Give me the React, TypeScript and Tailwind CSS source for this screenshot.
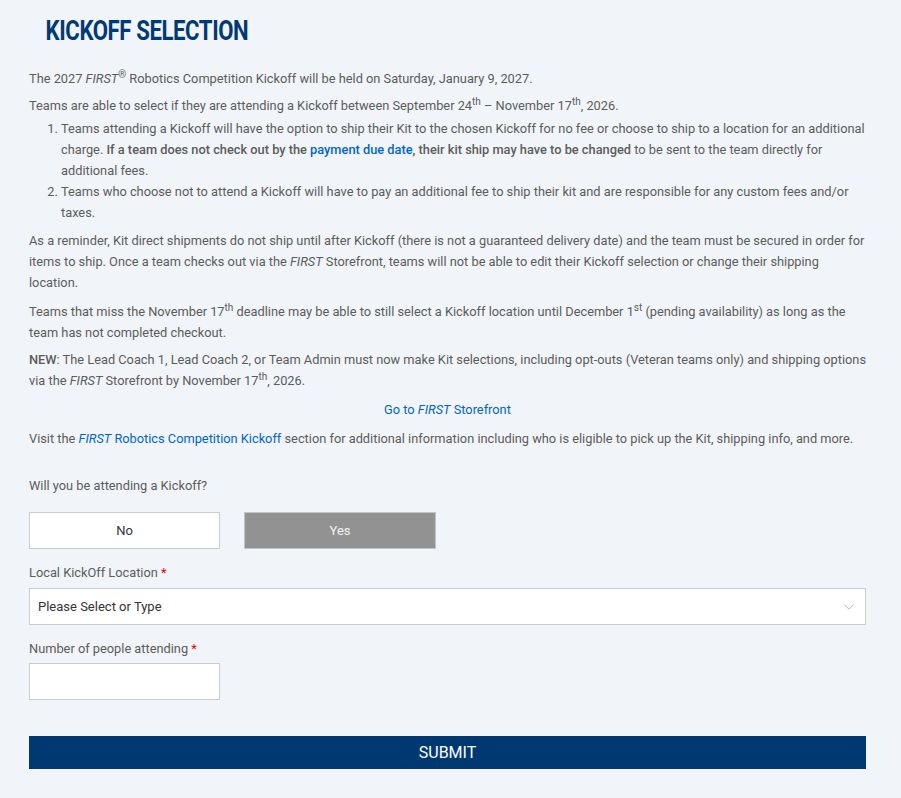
import { ChevronDown } from "lucide-react";

const font = { fontFamily: "Roboto, 'Liberation Sans', sans-serif" };

function Sup({ children }: { children: React.ReactNode }) {
  return <sup className="text-[10px] leading-none">{children}</sup>;
}

function First() {
  return <em>FIRST</em>;
}

export default function App() {
  return (
    <div className="min-h-[798px] bg-[#f1f4f9] text-[#5c5c5c] text-[12.8px] leading-[21px]" style={font}>
      <div className="pl-[29px] pr-[35px] pt-[14px] pb-[28px]">
        <h1 className="pl-[21px] text-[28px] leading-[34px] font-bold text-[#003a74] tracking-[-0.5px] origin-left scale-x-[0.79] whitespace-nowrap">
          KICKOFF SELECTION
        </h1>

        <div className="mt-[20px] -mr-[4px] flex flex-col gap-[6px]">
          <p>
            The 2027 <First /><Sup>®</Sup> Robotics Competition Kickoff will be held on Saturday, January 9, 2027.
          </p>
          <div>
            <p>
              Teams are able to select if they are attending a Kickoff between September 24<Sup>th</Sup> – November 17<Sup>th</Sup>, 2026.
            </p>
            <ol className="list-decimal pl-[32px] mt-[2px]">
              <li>
                Teams attending a Kickoff will have the option to ship their Kit to the chosen Kickoff for no fee or choose to ship to a location for an additional charge.{" "}
                <strong className="font-medium">
                  If a team does not check out by the <a className="text-[#0066cc]">payment due date</a>, their kit ship may have to be changed
                </strong>{" "}
                to be sent to the team directly for additional fees.
              </li>
              <li>
                Teams who choose not to attend a Kickoff will have to pay an additional fee to ship their kit and are responsible for any custom fees and/or taxes.
              </li>
            </ol>
          </div>
          <p className="mt-[1px]">
            As a reminder, Kit direct shipments do not ship until after Kickoff (there is not a guaranteed delivery date) and the team must be secured in order for items to ship. Once a team checks out via the <First /> Storefront, teams will not be able to edit their Kickoff selection or change their shipping location.
          </p>
          <p className="mt-[2px]">
            Teams that miss the November 17<Sup>th</Sup> deadline may be able to still select a Kickoff location until December 1<Sup>st</Sup> (pending availability) as long as the team has not completed checkout.
          </p>
          <p>
            <strong className="font-medium">NEW</strong>: The Lead Coach 1, Lead Coach 2, or Team Admin must now make Kit selections, including opt-outs (Veteran teams only) and shipping options via the <First /> Storefront by November 17<Sup>th</Sup>, 2026.
          </p>
          <p className="text-center text-[#0066cc] mt-[2px] pr-[4px]">
            Go to <First /> Storefront
          </p>
          <p className="mt-[2px]">
            Visit the <span className="text-[#0066cc]"><First /> Robotics Competition Kickoff</span> section for additional information including who is eligible to pick up the Kit, shipping info, and more.
          </p>
        </div>

        <p className="mt-[26px]">Will you be attending a Kickoff?</p>
        <div className="mt-[16px] flex gap-[24px]">
          <button className="w-[191px] h-[37px] bg-white border border-[#cccccc] text-[#333] text-[13px]">No</button>
          <button className="w-[192px] h-[37px] bg-[#929292] border border-[#c4c4c4] text-[#f2f2f2] text-[13px]">Yes</button>
        </div>

        <p className="mt-[13px]">
          Local KickOff Location <span className="text-[#e00]">*</span>
        </p>
        <div className="mt-[5px] h-[37px] bg-white border border-[#cccccc] flex items-center justify-between pl-[8px] pr-[7px] text-[#333] text-[13px]">
          <span>Please Select or Type</span>
          <ChevronDown className="w-[18px] h-[18px] text-[#b0b0b0]" strokeWidth={1.2} />
        </div>

        <p className="mt-[13px]">
          Number of people attending <span className="text-[#e00]">*</span>
        </p>
        <div className="mt-[4px] w-[191px] h-[37px] bg-white border border-[#cccccc]" />

        <button className="mt-[36px] w-full h-[33px] bg-[#003872] text-white text-[16px]">SUBMIT</button>
      </div>
    </div>
  );
}
